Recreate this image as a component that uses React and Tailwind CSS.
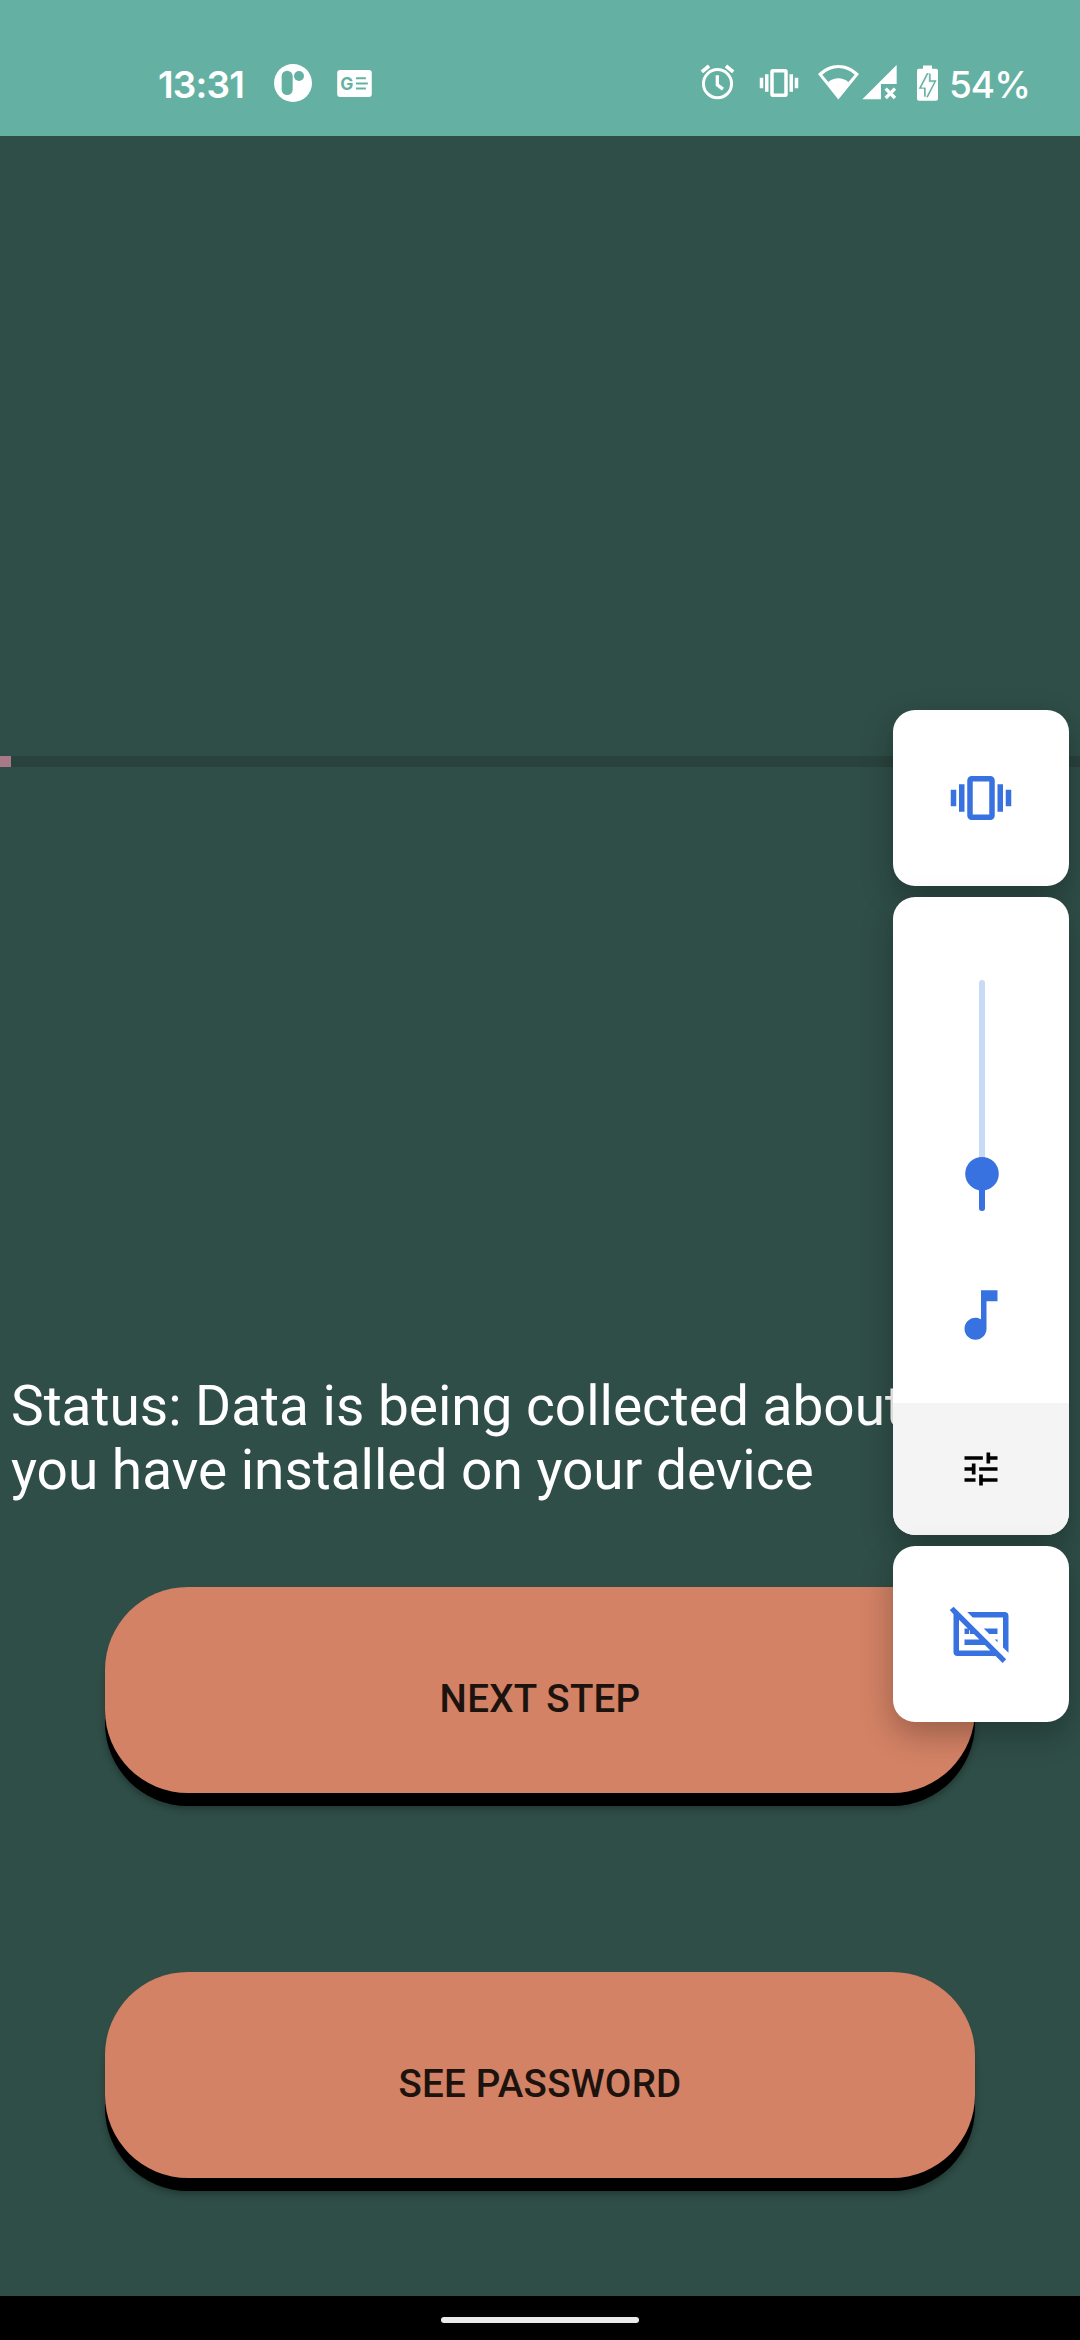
import React from "react";

function VibrateIcon({ className }) {
  return (
    <svg viewBox="-12 -12 24 24" className={className} fill="currentColor">
      <path d="M-11 -3h2v6h-2zM-8 -5h2v10h-2zM6 -5h2v10h-2zM9 -3h2v6h-2z" />
      <rect x="-4" y="-7" width="8" height="14" rx="0.6" fill="none" stroke="currentColor" strokeWidth="2" />
    </svg>
  );
}

function AppBadgeIcon({ className }) {
  return (
    <svg viewBox="0 0 114 114" className={className}>
      <circle cx="57" cy="57" r="57" fill="#fff" />
      <rect x="23" y="20" width="33" height="73" rx="16.5" fill="#64b1a3" />
      <circle cx="75" cy="36" r="15" fill="#64b1a3" />
    </svg>
  );
}

function NewsIcon({ className }) {
  return (
    <svg viewBox="0 0 105 82" className={className}>
      <rect width="105" height="82" rx="9" fill="#fff" />
      <text x="9" y="60" fontFamily="Inter, sans-serif" fontSize="53" fontWeight="700" fill="#64b1a3">G</text>
      <path d="M57 22h30v6h-30zM57 38h36v6h-36zM57 53h30v6h-30z" fill="#64b1a3" />
    </svg>
  );
}

function AlarmIcon({ className }) {
  return (
    <svg viewBox="60 40 105 115" className={className} fill="none" stroke="#fff">
      <circle cx="112.500" cy="102.500" r="42.500" strokeWidth="9" />
      <path d="M112 77V106L129 119" strokeWidth="10" />
      <path d="M65 67L87 49M160 67L138 49" strokeWidth="11" />
    </svg>
  );
}

function WifiIcon({ className }) {
  return (
    <svg viewBox="414 43 124 108" className={className} fill="#fff">
      <path
        fillRule="evenodd"
        d="M414 73C450 36 502 36 538 73L475.500 150ZM427 75L445 97C463 82 488 82 506 97L525 75C496 48 456 48 427 75Z"
      />
    </svg>
  );
}

function SignalIcon({ className }) {
  return (
    <svg viewBox="547 43 105 108" className={className} fill="#fff">
      <path d="M548 149L651 46V103H604V149Z" />
      <path d="M618 117L646 145M646 117L618 145" stroke="#fff" strokeWidth="10" />
    </svg>
  );
}

function BatteryIcon({ className }) {
  return (
    <svg viewBox="711 46 63 107" className={className}>
      <path d="M729 47h27v10h12q6 0 6 6v84q0 6-6 6h-51q-6 0-6-6v-84q0-6 6-6h12z" fill="#fff" />
      <path d="M746 72L726 111H738V140L760 97H746V72Z" fill="#64b1a3" stroke="#64b1a3" strokeWidth="12" />
      <path d="M746 72L725 112H738V141L761 97H746Z" fill="#fff" stroke="#fff" strokeWidth="2" />
    </svg>
  );
}

function StatusBar() {
  return (
    <header className="flex h-[136px] shrink-0 bg-[#64b1a3] pt-[63px] font-['Inter',sans-serif] text-[37px] leading-[44px] font-semibold text-white">
      <span className="ml-[158px] w-[116px] tracking-[-0.8px]">13:31</span>
      <AppBadgeIcon className="mt-px h-[38px] w-[38px]" />
      <NewsIcon className="mt-[7px] ml-[25px] h-[27px] w-[35px]" />
      <AlarmIcon className="ml-[328px] h-[38px] w-[35px]" />
      <VibrateIcon className="ml-[23px] -mt-px h-[42px] w-[42px]" />
      <WifiIcon className="ml-[18px] mt-[1px] h-[36px] w-[41px]" />
      <SignalIcon className="ml-[3px] mt-[1px] h-[36px] w-[35px]" />
      <BatteryIcon className="ml-[20px] mt-[2px] h-[36px] w-[21px]" />
      <span className="ml-[11px] font-medium tracking-[-1px]">54%</span>
    </header>
  );
}

function ActionButton({ children }) {
  return (
    <button className="mx-[105px] block h-[206px] w-[870px] shrink-0 rounded-[83px] bg-[#d38265] pt-[18px] text-[38.5px] font-medium tracking-[0.25px] text-[#1c130f] shadow-[0_13px_0_0_#000,0_16px_7px_0_rgba(0,0,0,0.3)]">
      {children}
    </button>
  );
}

const card = "w-[176px] rounded-[22px] bg-white shadow-[0_12px_32px_0_rgba(0,0,0,0.28)]";

function VolumePanel() {
  return (
    <aside className="absolute top-[710px] left-[893px] flex flex-col gap-[11px] text-[#3872e0]">
      <div className={card + " flex h-[176px] items-center justify-center"}>
        <VibrateIcon className="h-[66px] w-[66px]" />
      </div>
      <div className={card + " flex h-[638px] flex-col items-center overflow-hidden"}>
        <svg viewBox="0 0 34 231" className="mt-[83px] ml-[2px] h-[231px] w-[34px] shrink-0">
          <rect x="14" width="6" height="231" rx="3" fill="#c8daf5" />
          <rect x="14" y="190" width="6" height="41" rx="3" fill="#3872e0" />
          <circle cx="17" cy="193.700" r="16.800" fill="#3872e0" />
        </svg>
        <svg viewBox="0 0 24 24" className="mt-[70.750px] h-[66px] w-[66px] shrink-0" fill="currentColor">
          <path d="M12 3v10.550c-.59-.34-1.270-.55-2-.55-2.210 0-4 1.790-4 4s1.790 4 4 4 4-1.790 4-4V7h4V3h-6z" />
        </svg>
        <div className="mt-auto flex h-[132px] w-full shrink-0 items-center justify-center bg-[#f4f4f4] text-black">
          <svg viewBox="0 0 24 24" className="h-[44px] w-[44px]" fill="currentColor">
            <path d="M3 17v2h6v-2H3zM3 5v2h10V5H3zm10 16v-2h8v-2h-8v-2h-2v6h2zM7 9v2H3v2h4v2h2V9H7zm14 4v-2H11v2h10zm-6-4h2V7h4V5h-4V3h-2v6z" />
          </svg>
        </div>
      </div>
      <div className={card + " flex h-[176px] items-center justify-center"}>
        <svg viewBox="0 0 24 24" className="h-[66px] w-[66px]" fill="currentColor">
          <path d="M7 4H20.500Q22 4 22 5.500V18.800L20 16.900V6H9Z" />
          <path d="M13 10H18V12H15ZM17 14H18V15Z" />
          <path d="M0.650 3.300L2.050 2.050L21.150 21.200L19.850 22.550L17.300 20H3.500Q2 20 2 18.500V4.800ZM4 6.800V18H15.400L13.400 16H6V14H11.400L9.400 12H8V10.800L4 6.800Z" fillRule="evenodd" />
          <path d="M6 10H7.700V12H6Z" />
        </svg>
      </div>
    </aside>
  );
}

export default function App() {
  return (
    <div className="relative flex h-[2340px] w-[1080px] flex-col overflow-hidden bg-[#2f4e47] font-['Roboto',sans-serif]">
      <StatusBar />
      <main className="flex flex-1 flex-col">
        <div className="mt-[620px] h-[11px] shrink-0 bg-[#2a423d]">
          <div className="h-full w-[11px] bg-[#a87a88]" />
        </div>
        <p className="mt-[607px] ml-[11px] h-[128px] shrink-0 text-[55px] leading-[64px] tracking-[-0.02px] whitespace-nowrap text-white">
          Status: Data is being collected about
          <br />
          you have installed on your device
        </p>
        <div className="mt-[85px] flex flex-col gap-[179px]">
          <ActionButton>NEXT STEP</ActionButton>
          <ActionButton>SEE PASSWORD</ActionButton>
        </div>
      </main>
      <nav className="flex h-[44px] shrink-0 justify-center bg-black pt-[21px]">
        <div className="h-[6px] w-[198px] rounded-full bg-[#ebebeb]" />
      </nav>
      <VolumePanel />
    </div>
  );
}
